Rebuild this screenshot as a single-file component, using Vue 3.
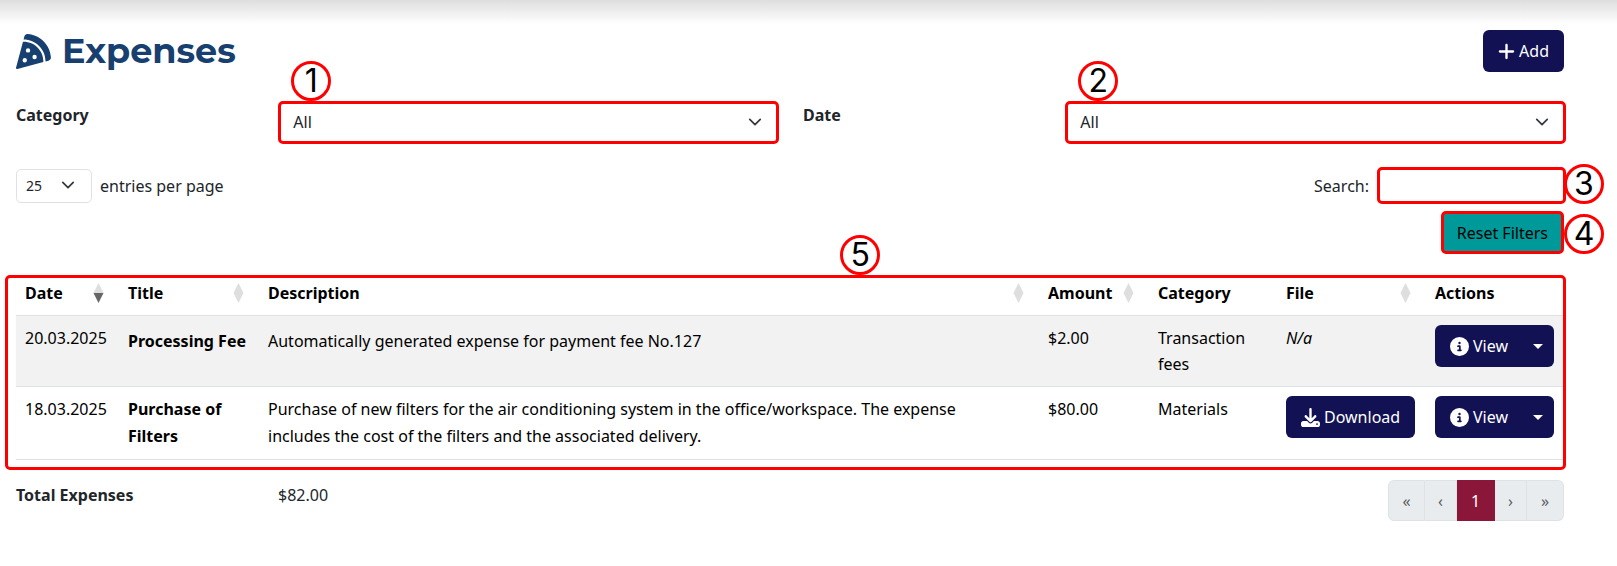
<template>
  <div class="page">
    <header class="page-header">
      <h1 class="title">
        <svg class="title-icon" viewBox="0 0 512 512" aria-hidden="true">
          <path :d="icons.pizza" />
        </svg>
        Expenses
      </h1>
      <button type="button" class="btn">
        <svg class="icon-plus" viewBox="0 0 448 512" aria-hidden="true">
          <path :d="icons.plus" />
        </svg>
        Add
      </button>
    </header>

    <section class="filters">
      <template v-for="filter in filters" :key="filter.id">
        <label class="filter-label" :for="filter.id">{{ filter.label }}</label>
        <div class="select-wrap">
          <select :id="filter.id" v-model="filter.value" class="select framed">
            <option>All</option>
          </select>
          <svg class="chevron" viewBox="0 0 16 16" aria-hidden="true">
            <path d="m2 5 6 6 6-6" />
          </svg>
          <span class="marker marker-top">{{ filter.marker }}</span>
        </div>
      </template>
    </section>

    <section class="controls">
      <div class="length">
        <div class="select-wrap">
          <select id="page-length" v-model="pageLength" class="select select-sm">
            <option>25</option>
            <option>50</option>
            <option>100</option>
          </select>
          <svg class="chevron" viewBox="0 0 16 16" aria-hidden="true">
            <path d="m2 5 6 6 6-6" />
          </svg>
        </div>
        <label for="page-length">entries per page</label>
      </div>
      <div class="search">
        <label for="search">Search:</label>
        <div class="search-wrap">
          <input id="search" v-model="search" type="search" class="search-input framed" />
          <span class="marker marker-side">3</span>
        </div>
      </div>
    </section>

    <div class="reset-row">
      <div class="reset-wrap">
        <button type="button" class="reset framed" @click="resetFilters">Reset Filters</button>
        <span class="marker marker-side">4</span>
      </div>
    </div>

    <div class="table-frame framed">
      <span class="marker marker-table">5</span>
      <table class="expenses">
        <colgroup>
          <col v-for="column in columns" :key="column.label" :class="column.width" />
        </colgroup>
        <thead>
          <tr>
            <th v-for="column in columns" :key="column.label" scope="col">
              <div class="th-inner">
                {{ column.label }}
                <svg
                  v-if="column.sortable"
                  class="sort"
                  :class="{ desc: column.sorted }"
                  viewBox="0 0 10 20"
                  aria-hidden="true"
                >
                  <path d="M5 0l5 10H0z" />
                  <path class="down" d="M0 10h10L5 20z" />
                </svg>
              </div>
            </th>
          </tr>
        </thead>
        <tbody>
          <tr v-for="row in rows" :key="row.date" :class="{ short: !row.file }">
            <td>{{ row.date }}</td>
            <td class="name">{{ row.title }}</td>
            <td class="description">{{ row.description }}</td>
            <td>{{ row.amount }}</td>
            <td>{{ row.category }}</td>
            <td :class="{ 'has-button': row.file }">
              <button v-if="row.file" type="button" class="btn">
                <svg class="icon" viewBox="0 0 512 512" aria-hidden="true">
                  <path :d="icons.download" />
                </svg>
                Download
              </button>
              <em v-else>N/a</em>
            </td>
            <td class="has-button">
              <div class="btn-group">
                <button type="button" class="btn">
                  <svg class="icon" viewBox="0 0 512 512" aria-hidden="true">
                    <path :d="icons.info" />
                  </svg>
                  View
                </button>
                <button type="button" class="btn btn-toggle" aria-label="More actions">
                  <span class="caret"></span>
                </button>
              </div>
            </td>
          </tr>
        </tbody>
      </table>
    </div>

    <footer class="summary">
      <strong class="summary-label">Total Expenses</strong>
      <span class="summary-value">$82.00</span>
      <nav class="pagination" aria-label="Pages">
        <button type="button" class="page-btn wide" disabled>«</button>
        <button type="button" class="page-btn" disabled>‹</button>
        <button type="button" class="page-btn wide active">1</button>
        <button type="button" class="page-btn" disabled>›</button>
        <button type="button" class="page-btn wide" disabled>»</button>
      </nav>
    </footer>
  </div>
</template>

<script setup>
import { ref } from "vue";

const filters = ref([
  { id: "category", label: "Category", value: "All", marker: 1 },
  { id: "date", label: "Date", value: "All", marker: 2 },
]);
const pageLength = ref("25");
const search = ref("");

const columns = [
  { label: "Date", width: "col-date", sortable: true, sorted: true },
  { label: "Title", width: "col-title", sortable: true },
  { label: "Description", width: "col-description", sortable: true },
  { label: "Amount", width: "col-amount", sortable: true },
  { label: "Category", width: "col-category" },
  { label: "File", width: "col-file", sortable: true },
  { label: "Actions", width: "col-actions" },
];

const rows = [
  {
    date: "20.03.2025",
    title: "Processing Fee",
    description: "Automatically generated expense for payment fee No.127",
    amount: "$2.00",
    category: "Transaction fees",
    file: false,
  },
  {
    date: "18.03.2025",
    title: "Purchase of Filters",
    description:
      "Purchase of new filters for the air conditioning system in the office/workspace. The expense includes the cost of the filters and the associated delivery.",
    amount: "$80.00",
    category: "Materials",
    file: true,
  },
];

const icons = {
  pizza:
    "M169.7.9c-22.8-1.6-41.9 14-47.5 34.7L110.4 80h1.6c176.7 0 320 143.3 320 320v1.6l44.4-11.8c20.8-5.5 36.3-24.7 34.7-47.5C498.5 159.5 352.5 13.5 169.7.9zM399.8 410.2c.1-3.4.2-6.8.2-10.2 0-159.1-128.9-288-288-288-3.4 0-6.8.1-10.2.2L.5 491.9c-1.5 5.5.1 11.4 4.1 15.4s9.9 5.6 15.4 4.1l379.8-101.2zM176 208a32 32 0 1 1 0 64 32 32 0 1 1 0-64zm64 128a32 32 0 1 1 64 0 32 32 0 1 1-64 0zM96 384a32 32 0 1 1 64 0 32 32 0 1 1-64 0z",
  plus: "M256 80c0-17.7-14.3-32-32-32s-32 14.3-32 32v144H48c-17.7 0-32 14.3-32 32s14.3 32 32 32h144v144c0 17.7 14.3 32 32 32s32-14.3 32-32V288h144c17.7 0 32-14.3 32-32s-14.3-32-32-32H256V80z",
  info: "M256 512A256 256 0 1 0 256 0a256 256 0 1 0 0 512zM216 336h24v-64h-24c-13.3 0-24-10.7-24-24s10.7-24 24-24h48c13.3 0 24 10.7 24 24v88h8c13.3 0 24 10.7 24 24s-10.7 24-24 24h-80c-13.3 0-24-10.7-24-24s10.7-24 24-24zm40-208a32 32 0 1 1 0 64 32 32 0 1 1 0-64z",
  download:
    "M288 32c0-17.7-14.3-32-32-32s-32 14.3-32 32v242.7l-73.4-73.4c-12.5-12.5-32.8-12.5-45.3 0s-12.5 32.8 0 45.3l128 128c12.5 12.5 32.8 12.5 45.3 0l128-128c12.5-12.5 12.5-32.8 0-45.3s-32.8-12.5-45.3 0L288 274.7V32zM64 352c-35.3 0-64 28.7-64 64v32c0 35.3 28.7 64 64 64h384c35.3 0 64-28.7 64-64v-32c0-35.3-28.7-64-64-64H346.5l-45.3 45.3c-25 25-65.5 25-90.5 0L165.5 352H64zm368 56a24 24 0 1 1 0 48 24 24 0 1 1 0-48z",
};

const resetFilters = () => {
  filters.value.forEach(filter => {
    filter.value = "All";
  });
  search.value = "";
};
</script>

<style>
body {
  margin: 0;
  background: #fff;
}
</style>

<style scoped>
.page {
  padding: 30px 53px 40px 16px;
  background: linear-gradient(#dedede, #fff 24px);
  color: #212529;
  font-family: "Noto Sans", "Segoe UI", sans-serif;
  font-size: 16px;
  line-height: 26px;
}

button,
input,
select {
  box-sizing: border-box;
  margin: 0;
  font: inherit;
  color: inherit;
}

.page-header {
  display: flex;
  justify-content: space-between;
  align-items: center;
}

.title {
  display: flex;
  align-items: center;
  gap: 11px;
  margin: 0;
  color: #173f6f;
  font-family: Montserrat, Inter, sans-serif;
  font-size: 35px;
  font-weight: 700;
  line-height: 42px;
}

.title-icon {
  width: 35px;
  height: 35px;
  fill: currentColor;
}

.btn {
  display: inline-flex;
  align-items: center;
  gap: 4px;
  height: 42px;
  padding: 0 15px;
  border: 0;
  border-radius: 6px;
  background: #121154;
  color: #fff;
  white-space: nowrap;
  cursor: pointer;
}

.icon,
.icon-plus {
  width: 19px;
  height: 19px;
  fill: currentColor;
}

.icon-plus {
  width: 17px;
}

/* red callouts */
.framed {
  border: 3px solid #f00;
  border-radius: 5px;
}

.marker {
  position: absolute;
  box-sizing: border-box;
  width: 40px;
  height: 40px;
  border: 3px solid #f00;
  border-radius: 50%;
  background: #fff;
  color: #000;
  font-family: Inter, sans-serif;
  font-size: 32px;
  line-height: 34px;
  text-align: center;
}

.marker-top {
  bottom: 100%;
  left: 13px;
}

.marker-side {
  bottom: 0;
  left: 100%;
}

.search .marker-side {
  left: calc(100% - 2px);
}

.marker-table {
  bottom: 100%;
  left: calc(53% + 8px);
  margin-bottom: 3px;
}

/* filters */
.filters {
  display: grid;
  grid-template-columns: minmax(0, 238fr) minmax(0, 500fr) minmax(0, 238fr) minmax(0, 500fr);
  column-gap: 24px;
  margin: 29px -2px 0 0;
}

.filter-label {
  line-height: 28px;
  font-weight: 700;
}

.select-wrap,
.search-wrap,
.reset-wrap {
  position: relative;
}

.select {
  display: block;
  width: 100%;
  height: 43px;
  padding: 0 40px 2px 12px;
  background: #fff;
  appearance: none;
}

.select-sm {
  width: 76px;
  height: 34px;
  padding: 0 30px 0 9px;
  border: 1px solid #dee2e6;
  border-radius: 5px;
  font-size: 14px;
}

.chevron {
  position: absolute;
  top: 50%;
  right: 17px;
  width: 14px;
  height: 14px;
  margin-top: -8px;
  fill: none;
  stroke: #343a40;
  stroke-width: 2;
  stroke-linecap: round;
  stroke-linejoin: round;
  pointer-events: none;
}

/* length and search */
.controls {
  display: flex;
  justify-content: space-between;
  align-items: center;
  margin: 23px -2px 7px 0;
}

.length,
.search {
  display: flex;
  align-items: center;
  gap: 8px;
}

.search-input {
  display: block;
  width: 189px;
  height: 37px;
  padding: 0 8px;
  background: #fff;
}

.reset-row {
  display: flex;
  justify-content: flex-end;
}

.reset {
  display: block;
  height: 43px;
  padding: 0 13px;
  background: #099;
  color: #000;
}

/* table */
.table-frame {
  position: relative;
  margin: 21px -2px 10px -11px;
  padding: 0 0 7px 8px;
}

.expenses {
  width: 100%;
  border-collapse: collapse;
  table-layout: fixed;
  color: #000;
}

.col-date {
  width: 103px;
}

.col-title {
  width: 140px;
}

.col-amount {
  width: 110px;
}

.col-category {
  width: 128px;
}

.col-file {
  width: 149px;
}

.col-actions {
  width: 137px;
}

.expenses th,
.expenses td {
  padding: 9px;
  border-bottom: 1px solid #dee2e6;
  text-align: left;
  vertical-align: top;
}

.expenses th {
  padding: 2px 15px 9px 9px;
}

.th-inner {
  display: flex;
  justify-content: space-between;
  align-items: center;
}

.sort {
  flex: none;
  width: 11px;
  height: 20px;
  fill: #dedede;
}

.sort.desc .down {
  fill: #666;
}

.expenses td {
  height: 52px;
}

.name,
.description {
  line-height: 27px;
}

.name {
  font-weight: 700;
}

.expenses .description {
  padding-right: 28px;
}

.expenses .has-button {
  padding-right: 0;
}

.short {
  background: #f2f2f2;
}

.short .name,
.short .description {
  line-height: 32px;
}

.btn-group {
  display: flex;
}

.btn-group .btn:first-child {
  padding-right: 14px;
  border-radius: 6px 0 0 6px;
}

.btn-group .btn-toggle {
  padding: 0 11px;
  border-radius: 0 6px 6px 0;
}

.caret {
  border: 5px solid transparent;
  border-top-color: #fff;
  border-bottom: 0;
}

/* totals */
.summary {
  display: grid;
  grid-template-columns: minmax(0, 238fr) minmax(0, 1086fr) auto;
  column-gap: 24px;
  align-items: start;
}

.summary-label,
.summary-value {
  padding-top: 2px;
}

.pagination {
  display: flex;
}

.page-btn {
  width: 32px;
  height: 41px;
  padding: 0;
  border: 1px solid #dee2e6;
  border-left-width: 0;
  background: #e9ecef;
  color: #595c5f;
}

.page-btn.wide {
  width: 37px;
}

.page-btn:first-child {
  border-left-width: 1px;
  border-radius: 6px 0 0 6px;
}

.page-btn:last-child {
  border-radius: 0 6px 6px 0;
}

.page-btn.active {
  width: 38px;
  border-color: #8a1739;
  background: #8a1739;
  color: #fff;
}
</style>
